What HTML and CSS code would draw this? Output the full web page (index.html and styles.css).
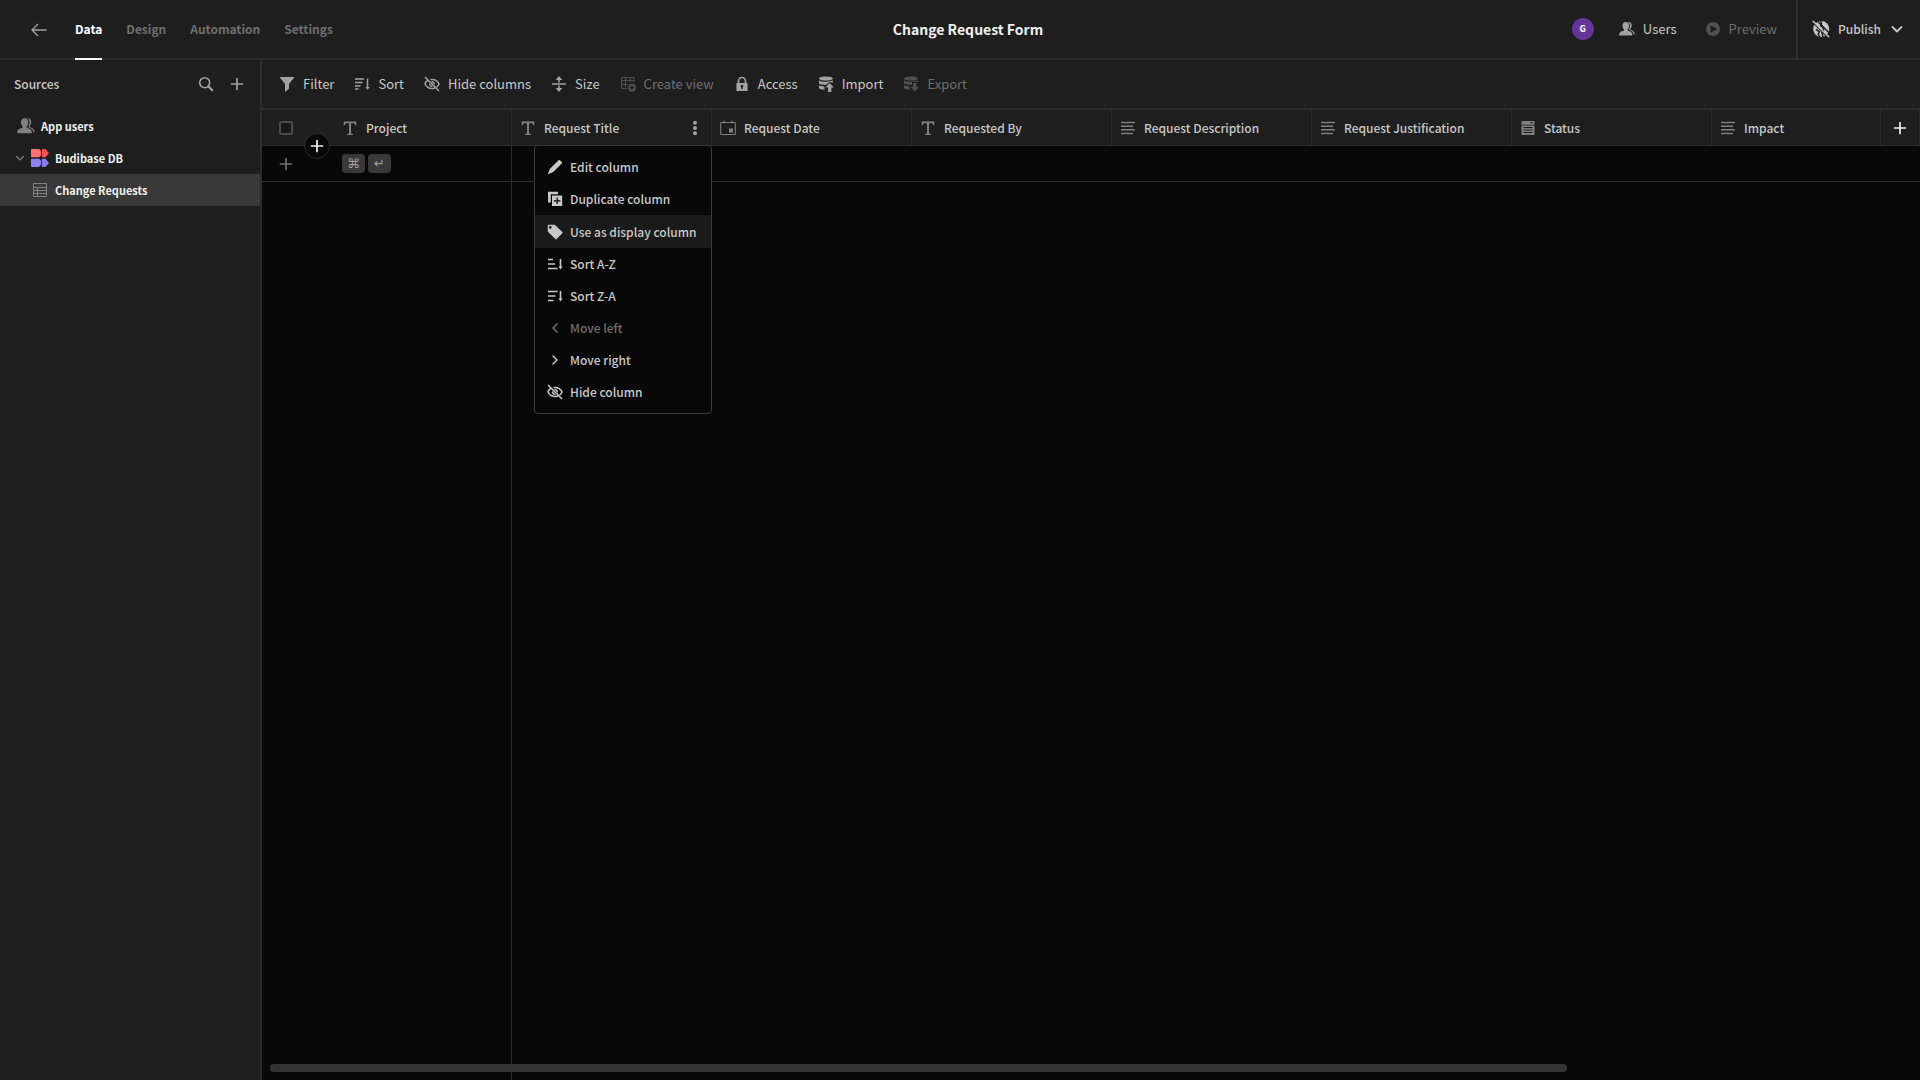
FILE: index.html
```html
<!DOCTYPE html>
<html lang="en">
<head>
<meta charset="utf-8">
<title>Change Request Form</title>
<link rel="stylesheet" href="styles.css">
</head>
<body>
<svg class="sprite" aria-hidden="true">
  <symbol id="i-back" viewBox="0 0 16 16"><path d="M15.500 8H1M7 2L1 8l6 6" fill="none" stroke="currentColor" stroke-width="1.300"/></symbol>
  <symbol id="i-search" viewBox="0 0 16 16"><circle cx="6.700" cy="6.700" r="5" fill="none" stroke="currentColor" stroke-width="1.600"/><path d="M10.300 10.300l4 4" stroke="currentColor" stroke-width="2" stroke-linecap="round"/></symbol>
  <symbol id="i-plus" viewBox="0 0 16 16"><path d="M8 2.500v11M2.500 8h11" fill="none" stroke="currentColor" stroke-width="1.700" stroke-linecap="round"/></symbol>
  <symbol id="i-users" viewBox="0 0 16 16"><path d="M6.800 1C4.600 1 3.500 2.600 3.500 4.700c0 1.500.7 2.900 1.500 3.700v1.200C3 10.300.5 10.800.2 13.500c0 .4.100 1 .6 1h11.900c.5 0 .6-.6.6-1-.3-2.700-2.800-3.200-4.700-3.900V8.400c.8-.8 1.500-2.200 1.500-3.700C10.100 2.600 9 1 6.800 1z"/><path d="M8.700.7c2.600.1 4 1.700 4 3.600 0 1.500-.6 2.800-1.400 3.600v.9c1.800.7 4.300 1.600 4.600 4.800h-1.200c-.4-2.400-1.800-3.400-4.600-4.500V7.700c.6-.6 1-1.800 1-3 0-1.800-.8-3.200-2.400-4z"/></symbol>
  <symbol id="i-play" viewBox="0 0 16 16"><path fill-rule="evenodd" d="M8 1a7 7 0 1 0 0 14A7 7 0 0 0 8 1zM5.500 4.200L12 8l-6.500 3.800z"/></symbol>
  <symbol id="i-globe-off" viewBox="0 0 18 18"><circle cx="9.200" cy="9" r="8"/><path d="M8.500 0l1 3.500-.8 2.300 2.300 1.700.5 3-1.500 2 1 5.500M4 9.500l3.300 2-1 3 2 3.500" fill="none" stroke="#1e1e1e" stroke-width="1.500"/><path d="M0 1.500l16 16M3.500-.8L19 14.700" stroke="#1e1e1e" stroke-width="1.500"/><path d="M1.200 1.200l15.500 15.500" stroke="currentColor" stroke-width="1.500" stroke-linecap="round"/></symbol>
  <symbol id="i-down" viewBox="0 0 16 16"><path d="M3.500 6L8 10.500 12.500 6" fill="none" stroke="currentColor" stroke-width="1.800" stroke-linecap="round" stroke-linejoin="round"/></symbol>
  <symbol id="i-left" viewBox="0 0 16 16"><path d="M10 4L6 8l4 4" fill="none" stroke="currentColor" stroke-width="1.500" stroke-linecap="round" stroke-linejoin="round"/></symbol>
  <symbol id="i-right" viewBox="0 0 16 16"><path d="M6 4l4 4-4 4" fill="none" stroke="currentColor" stroke-width="1.500" stroke-linecap="round" stroke-linejoin="round"/></symbol>
  <symbol id="i-logo" viewBox="0 0 18 18"><path fill="#ff7075" d="M.8 0h7.500A4 4 0 0 1 10 4.200 4 4 0 0 1 8 8.300H.8A.8.800 0 0 1 0 7.500V.8A.8.800 0 0 1 .8 0z"/><path fill="#ff4e4e" d="M11.500 0h3L18 4.200l-3.500 4.100h-3a.7.7 0 0 1-.7-.7V.7a.7.700 0 0 1 .7-.7z"/><path fill="#9081f4" d="M.8 9.700h7.500a4 4 0 0 1 1.700 4.200A4 4 0 0 1 8 18H.8a.8.800 0 0 1-.8-.8v-6.700a.8.800 0 0 1 .8-.8z"/><path fill="#8b7cf5" d="M11.500 9.700h3l3.500 4.200-3.500 4.100h-3a.7.700 0 0 1-.7-.7v-6.900a.7.700 0 0 1 .7-.7z"/></symbol>
  <symbol id="i-table" viewBox="0 0 16 16"><path d="M1.500 1.500h13v13h-13zM1.500 5.500h13M1.500 8.500h13M1.500 11.500h13M5.500 5.500v9" fill="none" stroke="currentColor"/></symbol>
  <symbol id="i-filter" viewBox="0 0 16 16"><path d="M1.300 1h13.400c.4 0 .5.400.3.700L10 8v4.700l-3.300 2.800c-.3.200-.7 0-.7-.3V8L1 1.700c-.2-.3-.1-.7.300-.7z"/></symbol>
  <symbol id="i-sort" viewBox="0 0 16 16"><path d="M1 3h9M1 6.500h7.500M1 10h5.500M1 13h3.500M13.500 2.500V12" fill="none" stroke="currentColor" stroke-width="1.500"/><path d="M11.300 11h4.400l-2.200 2.800z"/></symbol>
  <symbol id="i-sort-za" viewBox="0 0 16 16"><path d="M1 3.500h9.500M1 8h7.500M1 12.500h5.500M13.500 3v9" fill="none" stroke="currentColor" stroke-width="1.600"/><path d="M11.500 10.500h4l-2 3z"/></symbol>
  <symbol id="i-sort-az" viewBox="0 0 16 16"><path d="M1 3.500h5M1 8h7M1 12.500h9.500M13.500 3v9" fill="none" stroke="currentColor" stroke-width="1.600"/><path d="M11.500 10.500h4l-2 3z"/></symbol>
  <symbol id="i-eye-off" viewBox="0 0 16 16"><path d="M1 1l14 14M4.500 4C2.700 5 1.400 6.500.9 7.800 1.900 10 4.700 12.600 8 12.600c1 0 2-.2 2.900-.6M6.500 3.600C7 3.500 7.500 3.400 8 3.400c3.500 0 6.200 2.700 7.100 4.600-.4 1-1.300 2.200-2.500 3.100" fill="none" stroke="currentColor" stroke-width="1.500"/><path d="M7 5.200a3 3 0 0 1 3.800 3.900L9.300 7.500 8.400 6.600zM5.100 7.100l3.800 3.800A3 3 0 0 1 5.100 7.100z"/></symbol>
  <symbol id="i-size" viewBox="0 0 16 16"><path d="M1 8h14M8 2v4.500M8 9.500V14" stroke="currentColor" stroke-width="1.600"/><path d="M4.700 4L8 0l3.300 4zM4.700 12L8 16l3.300-4z"/></symbol>
  <symbol id="i-view" viewBox="0 0 16 16"><path d="M7 12.500H1.500v-11h12.500v5M1.500 4.500H14M1.500 8.500H8M5.500 1.500v11M10 1.500v5" fill="none" stroke="currentColor"/><path fill-rule="evenodd" d="M12 7.700a4 4 0 1 0 0 8 4 4 0 0 0 0-8zm-.6 1.700h1.200v1.700h1.700v1.200h-1.700V14h-1.200v-1.700H9.700v-1.200h1.700z"/></symbol>
  <symbol id="i-lock" viewBox="0 0 16 16"><path fill-rule="evenodd" d="M3 7h10c.4 0 .6.200.6.600v6.800c0 .4-.2.600-.6.600H3c-.4 0-.6-.2-.6-.6V7.600c0-.4.200-.6.600-.6zm4.300 4.500V13h1.400v-1.500a1.400 1.400 0 1 0-1.400 0z"/><path d="M4.500 7.500V5a3.500 3.500 0 0 1 7 0v2.500" fill="none" stroke="currentColor" stroke-width="1.700"/></symbol>
  <symbol id="i-import" viewBox="0 0 16 16"><path d="M8 .5c3.800 0 6.800.8 6.800 2S11.800 4.600 8 4.600 1 3.700 1 2.500s3.200-2 7-2zM1 4.200c1 1 4 1.500 7 1.500 2.800 0 5.700-.5 6.800-1.400v2.400L11.500 5.900 8 9C4.900 9 2 8.600 1 7.600zM1 9.200c1 .8 3.300 1.100 5.500 1.200v3.300C4 13.600 1.200 13.200 1 12z"/><path d="M11.700 7l4.200 4.500h-2.500V16H10v-4.500H7.500z"/></symbol>
  <symbol id="i-export" viewBox="0 0 16 16"><path d="M8 .5c3.800 0 6.800.8 6.800 2S11.800 4.600 8 4.600 1 3.700 1 2.500s3.200-2 7-2zM1 4.200c1 1 4 1.500 7 1.500 2.800 0 5.700-.5 6.800-1.400V6H9v3C4.900 9 2 8.600 1 7.600zM1 9.200c1 .8 3.300 1.100 5.500 1.200v3.300C4 13.600 1.200 13.200 1 12z"/><path d="M11.700 15.500L7.500 11H10V7h3.400v4h2.500z"/></symbol>
  <symbol id="i-text" viewBox="0 0 16 16"><path d="M1.700 1.500h12.600v3.700H13l-.5-2H9v10.300l2 .4v1.100H5v-1.100l2-.4V3.200H3.500l-.5 2H1.700z"/></symbol>
  <symbol id="i-date" viewBox="0 0 16 16"><path d="M.7 2.500h14.600v12H.7zM4 .5v3M12 .5v3" fill="none" stroke="currentColor"/><path d="M9 8.500h4v4H9z"/></symbol>
  <symbol id="i-long" viewBox="0 0 16 16"><path d="M1 2.500h14M1 6.200h12M1 9.800h14M1 13.500h12" stroke="currentColor" stroke-width="1.500"/></symbol>
  <symbol id="i-options" viewBox="0 0 16 16"><path fill-rule="evenodd" d="M1.500 1h13v3.700h-13zM10 2l1.500 1.500L13 2zM1.500 5.500h13V15h-13zM3.500 7v1h9V7zM3.500 9.500v1h9v-1zM3.500 12v1h9v-1z"/></symbol>
  <symbol id="i-more" viewBox="0 0 16 16"><circle cx="8" cy="2.700" r="2"/><circle cx="8" cy="8" r="2"/><circle cx="8" cy="13.300" r="2"/></symbol>
  <symbol id="i-edit" viewBox="0 0 16 16"><path d="M11.600 1.200c.4-.4.900-.3 1.300 0l1.900 1.900c.4.400.4.900 0 1.300L6.300 12.900l-4.600 2.200c-.5.200-.9-.2-.7-.7l2-4.600z"/></symbol>
  <symbol id="i-copy" viewBox="0 0 16 16"><path d="M1 .8h10v2.400H3.800v8.300H1z"/><path fill-rule="evenodd" d="M5 4.500h10.200V15H5zM9.500 6.500v2.700H6.800v1.200h2.700v2.700h1.200v-2.700h2.700V9.200h-2.700V6.500z"/></symbol>
  <symbol id="i-tag" viewBox="0 0 16 16"><path fill-rule="evenodd" d="M1.200.8h6.500l7.700 7.300c.4.400.4.800 0 1.200l-5.800 5.800c-.4.400-.8.400-1.200 0L.8 7.800V1.200c0-.2.200-.4.400-.4zm2.100 1.300a1.300 1.300 0 1 0 0 2.600 1.300 1.300 0 0 0 0-2.600z"/></symbol>
</svg>

<header class="topbar">
  <nav class="tabs" aria-label="App sections">
    <a class="back" href="#" aria-label="Back"><svg class="icon"><use href="#i-back"/></svg></a>
    <a class="tab tab-active" href="#">Data</a>
    <a class="tab" href="#">Design</a>
    <a class="tab" href="#">Automation</a>
    <a class="tab" href="#">Settings</a>
  </nav>
  <h1 class="app-title">Change Request Form</h1>
  <div class="top-actions">
    <span class="avatar">G</span>
    <button class="action"><svg class="icon"><use href="#i-users"/></svg>Users</button>
    <button class="action" disabled><svg class="icon"><use href="#i-play"/></svg>Preview</button>
    <button class="publish"><svg class="icon icon-lg"><use href="#i-globe-off"/></svg>Publish<svg class="icon"><use href="#i-down"/></svg></button>
  </div>
</header>

<div class="workspace">
  <aside class="sidebar">
    <div class="sidebar-head">
      <h2 class="sidebar-title">Sources</h2>
      <button class="icon-button" aria-label="Search"><svg class="icon"><use href="#i-search"/></svg></button>
      <button class="icon-button" aria-label="Add source"><svg class="icon"><use href="#i-plus"/></svg></button>
    </div>
    <nav class="sources" aria-label="Sources">
      <a class="source" href="#"><svg class="icon icon-lg"><use href="#i-users"/></svg>App users</a>
      <a class="source source-db" href="#"><svg class="icon icon-sm"><use href="#i-down"/></svg><svg class="icon icon-lg"><use href="#i-logo"/></svg>Budibase DB</a>
      <a class="source source-table" href="#"><svg class="icon"><use href="#i-table"/></svg>Change Requests</a>
    </nav>
  </aside>

  <main class="content">
    <div class="toolbar">
      <button class="action"><svg class="icon"><use href="#i-filter"/></svg>Filter</button>
      <button class="action"><svg class="icon"><use href="#i-sort"/></svg>Sort</button>
      <button class="action"><svg class="icon"><use href="#i-eye-off"/></svg>Hide columns</button>
      <button class="action"><svg class="icon"><use href="#i-size"/></svg>Size</button>
      <button class="action" disabled><svg class="icon"><use href="#i-view"/></svg>Create view</button>
      <button class="action"><svg class="icon"><use href="#i-lock"/></svg>Access</button>
      <button class="action"><svg class="icon"><use href="#i-import"/></svg>Import</button>
      <button class="action" disabled><svg class="icon"><use href="#i-export"/></svg>Export</button>
    </div>

    <div class="grid">
      <table class="grid-table">
        <colgroup>
          <col class="col-gutter"><col class="col-first"><col class="col"><col class="col"><col class="col"><col class="col"><col class="col"><col class="col"><col><col class="col-add">
        </colgroup>
        <thead>
          <tr>
            <th class="gutter"><div class="cell"><input class="check" type="checkbox" aria-label="Select all rows"></div><button class="add-round" aria-label="Add row"><svg class="icon"><use href="#i-plus"/></svg></button></th>
            <th><div class="cell"><svg class="icon"><use href="#i-text"/></svg>Project</div></th>
            <th class="has-menu">
              <div class="cell"><svg class="icon"><use href="#i-text"/></svg><span class="cell-name">Request Title</span><button class="icon-button" aria-label="Column options"><svg class="icon"><use href="#i-more"/></svg></button></div>
              <div class="menu">
                <button class="menu-item"><svg class="icon"><use href="#i-edit"/></svg>Edit column</button>
                <button class="menu-item"><svg class="icon"><use href="#i-copy"/></svg>Duplicate column</button>
                <button class="menu-item menu-item-hover"><svg class="icon"><use href="#i-tag"/></svg>Use as display column</button>
                <button class="menu-item"><svg class="icon"><use href="#i-sort-az"/></svg>Sort A-Z</button>
                <button class="menu-item"><svg class="icon"><use href="#i-sort-za"/></svg>Sort Z-A</button>
                <button class="menu-item" disabled><svg class="icon"><use href="#i-left"/></svg>Move left</button>
                <button class="menu-item"><svg class="icon"><use href="#i-right"/></svg>Move right</button>
                <button class="menu-item"><svg class="icon"><use href="#i-eye-off"/></svg>Hide column</button>
              </div>
            </th>
            <th><div class="cell"><svg class="icon"><use href="#i-date"/></svg>Request Date</div></th>
            <th><div class="cell"><svg class="icon"><use href="#i-text"/></svg>Requested By</div></th>
            <th><div class="cell"><svg class="icon"><use href="#i-long"/></svg>Request Description</div></th>
            <th><div class="cell"><svg class="icon"><use href="#i-long"/></svg>Request Justification</div></th>
            <th><div class="cell"><svg class="icon"><use href="#i-options"/></svg>Status</div></th>
            <th><div class="cell"><svg class="icon"><use href="#i-long"/></svg>Impact</div></th>
            <th><div class="cell cell-add"><button class="icon-button bright" aria-label="Add column"><svg class="icon"><use href="#i-plus"/></svg></button></div></th>
          </tr>
        </thead>
        <tbody>
          <tr>
            <td><div class="cell"><button class="icon-button dim" aria-label="New row"><svg class="icon"><use href="#i-plus"/></svg></button></div></td>
            <td class="first-cell"><div class="keys"><kbd>⌘</kbd><kbd>↵</kbd></div></td>
            <td colspan="8"></td>
          </tr>
        </tbody>
      </table>
      <div class="grid-rest"><div class="pinned-edge"></div></div>
      <div class="scroll-track"><div class="scroll-thumb"></div></div>
    </div>
  </main>
</div>
</body>
</html>
```

FILE: styles.css
```css
:root {
  --panel: #1e1e1e;
  --base: #080808;
  --line: #2c2c2c;
  --selected: #393939;
  --text: #c8c8c8;
  --strong: #efefef;
  --muted: #6e6e6e;
  --icon: #a2a2a2;
}

* {
  box-sizing: border-box;
}

body {
  display: flex;
  flex-direction: column;
  min-height: 100vh;
  margin: 0;
  background: var(--base);
  color: var(--text);
  font: 400 13px/20px "Noto Sans CJK SC", sans-serif;
}

button {
  padding: 0;
  border: 0;
  background: none;
  color: inherit;
  font: inherit;
  white-space: nowrap;
}

a {
  color: inherit;
  text-decoration: none;
}

.sprite {
  position: absolute;
  width: 0;
  height: 0;
}

.icon {
  flex: none;
  display: block;
  width: 16px;
  height: 16px;
  fill: currentColor;
}

.icon-lg {
  width: 18px;
  height: 18px;
}

.icon-sm {
  width: 12px;
  height: 12px;
}

.icon-button {
  display: flex;
  color: var(--icon);
}

.bright {
  color: var(--strong);
}

.dim {
  color: var(--muted);
}

/* Top bar */
.topbar {
  display: grid;
  grid-template-columns: 1fr auto 1fr;
  height: 60px;
  padding-left: 16px;
  border-bottom: 2px solid var(--line);
  background: var(--panel);
}

.tabs {
  display: flex;
  gap: 24px;
  margin-bottom: -2px;
  padding-left: 15px;
}

.back {
  display: flex;
  align-items: center;
  margin-right: 4px;
  color: var(--icon);
}

.tab {
  display: flex;
  align-items: center;
  border-bottom: 2px solid transparent;
  color: var(--muted);
  font-size: 12px;
  font-weight: 700;
}

.tab-active {
  border-color: #ffffff;
  color: #ffffff;
}

.app-title {
  align-self: center;
  margin: 0;
  color: var(--strong);
  font-size: 14px;
  font-weight: 700;
}

.top-actions {
  display: flex;
  justify-content: flex-end;
  align-items: center;
}

.avatar {
  width: 22px;
  height: 22px;
  margin-right: 25px;
  border-radius: 50%;
  background: #673499;
  color: #ffffff;
  font-size: 9px;
  font-weight: 700;
  line-height: 22px;
  text-align: center;
}

.action {
  display: flex;
  align-items: center;
  gap: 8px;
}

.action .icon {
  color: var(--icon);
}

.action:disabled {
  color: var(--muted);
}

.action:disabled .icon {
  color: #505050;
}

.top-actions .action {
  margin-right: 28px;
}

.top-actions .action:disabled {
  margin-right: 19px;
}

.publish {
  display: flex;
  align-items: center;
  align-self: stretch;
  gap: 8px;
  padding: 0 15px 0 14px;
  border-left: 2px solid var(--line);
  font-size: 12px;
  font-weight: 500;
}

/* Sidebar */
.workspace {
  flex: 1;
  display: flex;
}

.sidebar {
  flex: none;
  width: 262px;
  border-right: 2px solid var(--line);
  background: var(--panel);
}

.sidebar-head {
  display: flex;
  align-items: center;
  gap: 15px;
  height: 50px;
  padding: 0 15px 2px 14px;
}

.sidebar-title {
  flex: 1;
  margin: 0;
  font-size: 12px;
  font-weight: 500;
}

.source {
  display: flex;
  align-items: center;
  gap: 6px;
  height: 32px;
  padding-left: 17px;
  color: var(--strong);
  font-size: 11px;
  font-weight: 700;
}

.source > .icon {
  color: #808080;
}

.source-db {
  gap: 4px;
  padding-left: 14px;
}

.source-db .icon-lg {
  margin-right: 2px;
}

.source-db .icon-sm {
  margin-right: 1px;
}

.source-table {
  padding-left: 32px;
  gap: 7px;
  background: var(--selected);
}

/* Content */
.content {
  flex: 1;
  min-width: 0;
  display: flex;
  flex-direction: column;
}

.toolbar {
  display: flex;
  align-items: center;
  gap: 20px;
  height: 50px;
  padding-left: 17px;
  border-bottom: 2px solid var(--line);
  background: var(--panel);
}

.grid {
  position: relative;
  flex: 1;
  display: flex;
  flex-direction: column;
}

.grid-table {
  width: 100%;
  border-collapse: separate;
  border-spacing: 0;
  table-layout: fixed;
}

.col-gutter {
  width: 72px;
}

.col-first {
  width: 178px;
}

.col {
  width: 200px;
}

.col-add {
  width: 39px;
}

th,
td {
  height: 36px;
  padding: 0;
  border-bottom: 1px solid var(--line);
}

th {
  border-right: 1px solid var(--line);
  background: var(--panel);
  font-size: 12px;
  font-weight: 500;
  text-align: left;
}

.gutter {
  position: relative;
  border-right: 0;
}

.first-cell {
  border-right: 1px solid var(--line);
}

.cell {
  display: flex;
  align-items: center;
  gap: 8px;
  padding: 0 8px;
  white-space: nowrap;
}

.cell > .icon {
  color: #808080;
}

.cell-name {
  flex: 1;
}

.cell-add {
  justify-content: center;
}

.gutter .cell {
  padding-left: 17px;
}

td .cell {
  padding-left: 16px;
}

.check {
  appearance: none;
  width: 14px;
  height: 14px;
  margin: 0;
  border: 2px solid #4c4c4c;
  border-radius: 2px;
  background: #171717;
}

.add-round {
  position: absolute;
  right: 4px;
  bottom: -14px;
  z-index: 1;
  display: grid;
  place-items: center;
  width: 26px;
  height: 26px;
  border: 1px solid var(--line);
  border-radius: 50%;
  background: var(--base);
  color: var(--strong);
}

.has-menu {
  position: relative;
}

.keys {
  display: flex;
  gap: 3px;
  padding-left: 8px;
}

kbd {
  width: 23px;
  height: 19px;
  border-radius: 4px;
  background: var(--selected);
  color: var(--icon);
  font: 13px/19px "DejaVu Sans", sans-serif;
  text-align: center;
}

.menu {
  position: absolute;
  top: 100%;
  right: -1px;
  z-index: 2;
  width: 178px;
  padding: 5px 0;
  border: 1px solid #3c3c3c;
  border-radius: 4px;
  background: var(--base);
}

.menu-item {
  display: flex;
  align-items: center;
  gap: 7px;
  width: 100%;
  height: 32px;
  padding-left: 12px;
}

.menu-item-hover {
  height: 33px;
  background: #1a1a1a;
}

.menu-item:disabled {
  color: var(--muted);
}

.grid-rest {
  flex: 1;
  display: flex;
}

.pinned-edge {
  width: 250px;
  border-right: 1px solid var(--line);
}

.scroll-track {
  position: absolute;
  right: 8px;
  bottom: 8px;
  left: 8px;
}

.scroll-thumb {
  width: 79%;
  height: 8px;
  border-radius: 4px;
  background: #333333;
}
```
